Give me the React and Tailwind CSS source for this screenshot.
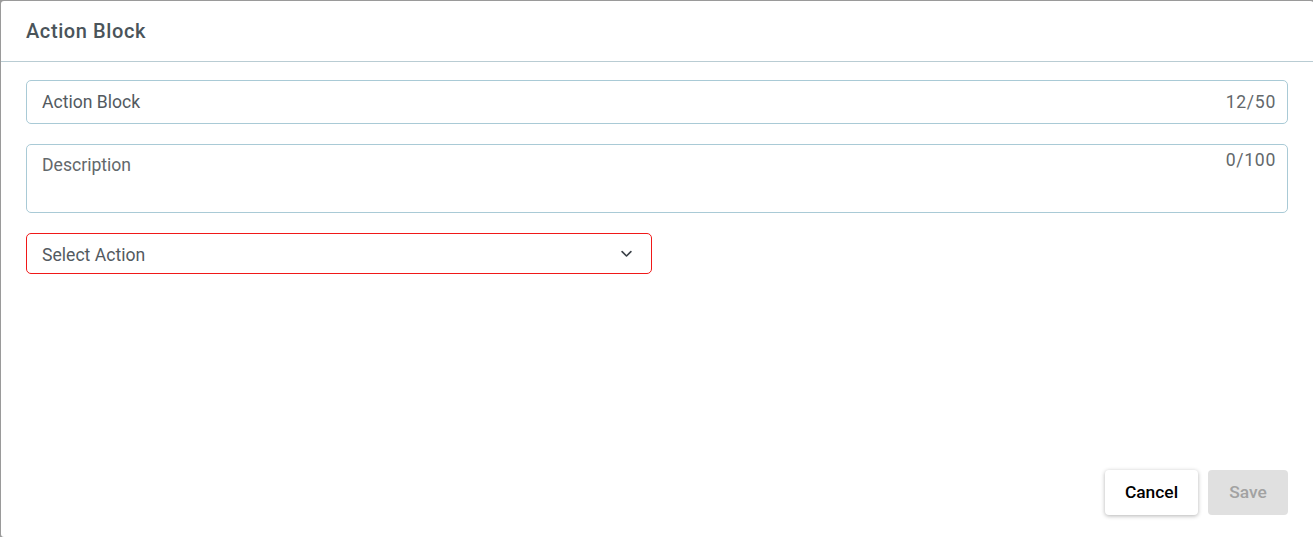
import React from "react";

export default function App() {
  return (
    <div
      className="w-[1313px] h-[537px] bg-[#9a9a9a] pt-px pl-px overflow-hidden"
      style={{ fontFamily: "Roboto, 'Liberation Sans', sans-serif" }}
    >
      <div className="w-[1313px] h-[536px] bg-white rounded-tl-[3px] rounded-bl-[3px] rounded-tr-[4px] flex flex-col">
        <div className="h-[61px] border-b border-[#b9ccd3] flex items-center px-[25px] shrink-0">
          <h1 className="text-[20px] font-medium text-[#4a545a] tracking-[0.6px]">Action Block</h1>
        </div>
        <div className="flex flex-col pl-[25px] pr-[26px] pt-[18px] flex-1">
          <div className="h-[44px] border border-[#a9cad6] rounded-[5px] flex items-center justify-between pl-[15px] pr-[11px]">
            <span className="text-[17.6px] text-[#535a5f]">Action Block</span>
            <span className="text-[17.6px] tracking-[0.7px] text-[#63686b]">12/50</span>
          </div>
          <div className="mt-[20px] h-[69px] border border-[#a9cad6] rounded-[5px] flex justify-between pl-[15px] pr-[11px]">
            <span className="text-[17.6px] text-[#63686b] mt-[7px]">Description</span>
            <span className="text-[17.6px] tracking-[0.7px] text-[#63686b] mt-[2px]">0/100</span>
          </div>
          <div className="mt-[20px] w-[626px] h-[41px] border border-[#f01818] rounded-[5px] flex items-center justify-between pl-[15px] pr-[17px]">
            <span className="text-[17.6px] text-[#535a5f] pt-[3px]">Select Action</span>
            <svg width="15" height="15" viewBox="0 0 24 24" fill="none" stroke="#3b4148" strokeWidth="2.6" strokeLinecap="round" strokeLinejoin="round">
              <path d="M5 9l7 7 7-7" />
            </svg>
          </div>
          <div className="flex-1" />
          <div className="flex justify-end gap-[10px] pb-[22px]">
            <button className="w-[93px] h-[45px] bg-white rounded-[4px] shadow-[0_1px_4px_rgba(0,0,0,0.3)] text-[17.4px] font-medium text-black">
              Cancel
            </button>
            <button className="w-[80px] h-[45px] bg-[#e0e0e0] rounded-[4px] text-[17.4px] font-medium text-[#a2a2a2]">
              Save
            </button>
          </div>
        </div>
      </div>
    </div>
  );
}
